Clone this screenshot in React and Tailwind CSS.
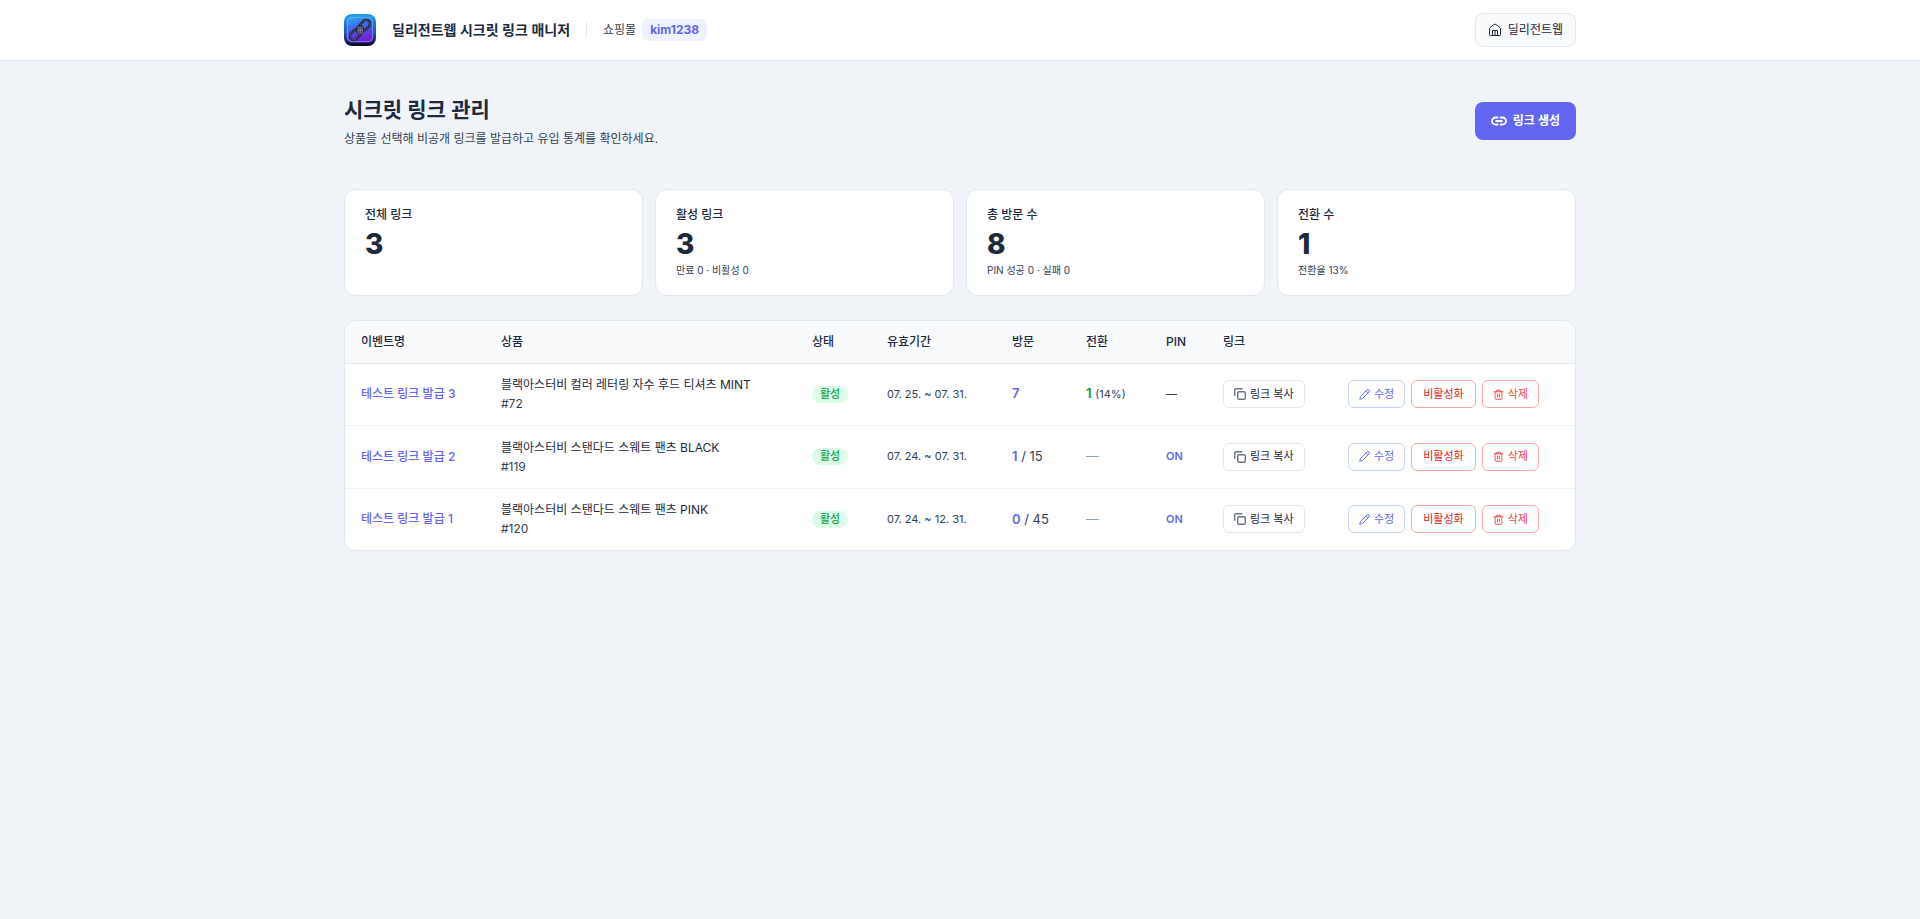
import React from "react";

const links = [
  {
    id: 3,
    name: "테스트 링크 발급 3",
    product: "블랙아스터비 컬러 레터링 자수 후드 티셔츠 MINT",
    productNo: "#72",
    period: "07. 25. ~ 07. 31.",
    visits: 7,
    conversions: 1,
    rate: "14%",
    pin: false,
  },
  {
    id: 2,
    name: "테스트 링크 발급 2",
    product: "블랙아스터비 스탠다드 스웨트 팬츠 BLACK",
    productNo: "#119",
    period: "07. 24. ~ 07. 31.",
    visits: 1,
    limit: 15,
    pin: true,
  },
  {
    id: 1,
    name: "테스트 링크 발급 1",
    product: "블랙아스터비 스탠다드 스웨트 팬츠 PINK",
    productNo: "#120",
    period: "07. 24. ~ 12. 31.",
    visits: 0,
    limit: 45,
    pin: true,
  },
];

const stats = [
  { label: "전체 링크", value: 3 },
  { label: "활성 링크", value: 3, sub: "만료 0 · 비활성 0" },
  { label: "총 방문 수", value: 8, sub: "PIN 성공 0 · 실패 0" },
  { label: "전환 수", value: 1, sub: "전환율 13%" },
];

function Logo() {
  return (
    <svg className="size-8" viewBox="0 0 32 32" aria-hidden="true">
      <defs>
        <linearGradient id="logoBg" x1="0" y1="0" x2="0.3" y2="1">
          <stop offset="0" stopColor="#2bb4f2" />
          <stop offset="0.45" stopColor="#3f6be6" />
          <stop offset="1" stopColor="#7420d6" />
        </linearGradient>
        <linearGradient id="logoEdge" x1="0" y1="0" x2="0" y2="1">
          <stop offset="0" stopColor="#1f9fe4" />
          <stop offset="0.6" stopColor="#2450b4" />
          <stop offset="1" stopColor="#080820" />
        </linearGradient>
      </defs>
      <rect width="32" height="32" rx="8" fill="url(#logoEdge)" />
      <rect x="2.5" y="2.5" width="27" height="26" rx="5" fill="url(#logoBg)" />
      <rect x="3.5" y="3.5" width="25" height="24" rx="4.5" fill="none" stroke="#6fd0ff" strokeOpacity="0.5" />
      <g transform="rotate(-45 16 16)" fill="none">
        <rect x="3.5" y="12.2" width="12" height="7.6" rx="3.8" stroke="#191b38" strokeWidth="2.4" />
        <rect x="16.5" y="12.2" width="12" height="7.6" rx="3.8" stroke="#191b38" strokeWidth="2.4" />
        <rect x="3.5" y="12.2" width="12" height="7.6" rx="3.8" stroke="#6a6d92" strokeWidth="0.7" />
        <rect x="16.5" y="12.2" width="12" height="7.6" rx="3.8" stroke="#6a6d92" strokeWidth="0.7" />
      </g>
      <ellipse cx="16" cy="16" rx="4.2" ry="5" fill="#20203d" />
      <rect x="14" y="13" width="4.2" height="6.4" rx="1.4" fill="#3a3553" stroke="#a99bbd" strokeWidth="0.8" />
      <path d="M16.1 14.8v2.6" stroke="#e0d0e0" strokeWidth="0.9" />
    </svg>
  );
}

function HomeIcon() {
  return (
    <svg className="size-3.5" viewBox="0 0 14 14" fill="none" stroke="currentColor" strokeLinejoin="round" aria-hidden="true">
      <path d="M1.5 5.8a1.5 1.5 0 0 1 .6-1.2L6.1 1.5a1.5 1.5 0 0 1 1.8 0l4 3.1a1.5 1.5 0 0 1 .6 1.2v6a.7.7 0 0 1-.7.7H2.2a.7.7 0 0 1-.7-.7z" />
      <path d="M4.5 12.5v-5h5v5M7 8v4.500" />
    </svg>
  );
}

function LinkIcon() {
  return (
    <svg className="size-4" viewBox="0 0 16 16" fill="none" stroke="currentColor" strokeWidth="1.8" strokeLinecap="round" aria-hidden="true">
      <path d="M6.5 4.5h-2a3.5 3.5 0 0 0 0 7h2M9.5 4.5h2a3.5 3.5 0 0 1 0 7h-2M5.2 8h5.6" />
    </svg>
  );
}

function CopyIcon() {
  return (
    <svg className="size-3" viewBox="0 0 12 12" fill="none" stroke="#6b7280" strokeWidth="1.4" strokeLinecap="round" strokeLinejoin="round" aria-hidden="true">
      <rect x="3.7" y="3.7" width="7.6" height="7.6" rx="1.4" />
      <path d="M.7 7.3V2.1A1.4 1.4 0 0 1 2.1.7h5.8" />
    </svg>
  );
}

function PencilIcon() {
  return (
    <svg className="size-[11px]" viewBox="0 0 12 12" fill="none" stroke="currentColor" strokeLinejoin="round" aria-hidden="true">
      <path d="M.8 11.2 1.6 8.2 8.7 1.1a1.5 1.5 0 0 1 2.2 2.2L3.8 10.4z" />
      <path d="m7.5 2.3 2.2 2.2" />
    </svg>
  );
}

function TrashIcon() {
  return (
    <svg className="size-[11px]" viewBox="0 0 12 12" fill="none" stroke="currentColor" strokeLinecap="round" strokeLinejoin="round" aria-hidden="true">
      <path d="M1.2 3h9.6M4 3V1.3h4V3M2.3 3v7.2a1 1 0 0 0 1 1h5.4a1 1 0 0 0 1-1V3M5 5.5v3M7 5.5v3" />
    </svg>
  );
}

function LinkRow({ link }) {
  return (
    <tr className="h-[62px] border-b border-slate-100 last:border-0 even:h-[63px]">
      <td className="px-4">
        <a href="#" className="font-medium text-[#6366f1]">{link.name}</a>
      </td>
      <td className="px-4 text-slate-800">
        <div className="leading-[19px]">{link.product}</div>
        <div className="leading-[19px] text-[#334155]">{link.productNo}</div>
      </td>
      <td className="px-4">
        <span className="inline-block rounded-full bg-green-100 px-2 text-[11px] leading-[17px] font-medium text-[#16a34a]">
          활성
        </span>
      </td>
      <td className="px-4 text-[11px]">{link.period}</td>
      <td className="px-4 text-[13px]">
        <span className="font-semibold text-[#6366f1]">{link.visits}</span>
        {link.limit && <span> / {link.limit}</span>}
      </td>
      <td className="px-4 text-[13px]">
        {link.conversions ? (
          <>
            <span className="font-bold text-[#16a34a]">{link.conversions}</span>{" "}
            <span className="text-[11px]">({link.rate})</span>
          </>
        ) : (
          <span className="text-slate-400">—</span>
        )}
      </td>
      <td className="px-4 text-[11px]">
        {link.pin ? <span className="font-semibold text-[#6366f1]">ON</span> : "—"}
      </td>
      <td className="px-4 text-[11px]">
        <button className="flex h-7 items-center gap-1 rounded-md border border-slate-200 bg-white px-2.5 text-slate-800">
          <CopyIcon /> 링크 복사
        </button>
      </td>
      <td className="px-4 text-[11px]">
        <div className="flex gap-1.5">
          <button className="flex h-7 items-center gap-1 rounded-md border border-[#c7d2fe] bg-white px-2.5 text-[#6366f1]">
            <PencilIcon /> 수정
          </button>
          <button className="flex h-7 items-center rounded-md border border-[#fca5a5] bg-white px-[11px] text-[#dc2626]">
            비활성화
          </button>
          <button className="flex h-7 items-center gap-1 rounded-md border border-[#fca5a5] bg-white px-2.5 text-[#ef4444]">
            <TrashIcon /> 삭제
          </button>
        </div>
      </td>
    </tr>
  );
}

function App() {
  return (
    <div className="min-h-screen bg-[#f0f4f9] font-['Inter','Noto_Sans_CJK_KR',sans-serif] text-xs text-[#334155]">

      {/* HEADER */}
      <header className="border-b border-slate-200 bg-white">
        <div className="mx-auto flex h-15 max-w-7xl items-center justify-between px-6">
          <div className="flex items-center">
            <Logo />
            <span className="ml-4 text-sm font-semibold text-slate-800">딜리전트웹 시크릿 링크 매니저</span>
            <span className="mx-4 h-4 w-px bg-slate-200" />
            <span>쇼핑몰</span>
            <span className="ml-1.5 rounded-md bg-[#eef2ff] px-2 leading-[22px] font-bold text-[#6366f1]">
              kim1238
            </span>
          </div>
          <a href="#" className="flex h-[34px] items-center gap-1.5 rounded-lg border border-slate-200 bg-slate-50 px-3 text-slate-800">
            <HomeIcon /> 딜리전트웹
          </a>
        </div>
      </header>

      <main className="mx-auto max-w-7xl px-6 py-8">

        {/* TITLE */}
        <div className="flex items-center justify-between">
          <div>
            <h1 className="text-[21px] leading-[34px] font-semibold text-slate-800">시크릿 링크 관리</h1>
            <p className="mt-0.5 leading-5">상품을 선택해 비공개 링크를 발급하고 유입 통계를 확인하세요.</p>
          </div>
          <button className="flex h-[38px] items-center gap-1.5 rounded-lg bg-[#6366f1] px-4 font-semibold text-white">
            <LinkIcon /> 링크 생성
          </button>
        </div>

        {/* STATS */}
        <div className="mt-10 grid grid-cols-4 gap-3">
          {stats.map((stat) => (
            <div key={stat.label} className="min-h-[107px] rounded-xl border border-slate-200 bg-white px-5 py-4">
              <p className="leading-[18px] font-medium text-slate-800">{stat.label}</p>
              <p className="mt-1 text-[28px] leading-8 font-extrabold text-slate-800">{stat.value}</p>
              {stat.sub && <p className="mt-0.5 text-[10px] leading-4">{stat.sub}</p>}
            </div>
          ))}
        </div>

        {/* TABLE */}
        <div className="mt-6 overflow-hidden rounded-xl border border-slate-200 bg-white">
          <table className="w-full table-fixed text-left whitespace-nowrap">
            <thead>
              <tr className="h-[42px] border-b border-slate-200 bg-slate-50 text-slate-800">
                <th className="w-[140px] px-4 font-medium">이벤트명</th>
                <th className="px-4 font-medium">상품</th>
                <th className="w-[75px] px-4 font-medium">상태</th>
                <th className="w-[125px] px-4 font-medium">유효기간</th>
                <th className="w-[74px] px-4 font-medium">방문</th>
                <th className="w-[80px] px-4 font-medium">전환</th>
                <th className="w-[57px] px-4 font-medium">PIN</th>
                <th className="w-[125px] px-4 font-medium">링크</th>
                <th className="w-[243px] px-4" aria-label="관리"></th>
              </tr>
            </thead>
            <tbody>
              {links.map((link) => (
                <LinkRow key={link.id} link={link} />
              ))}
            </tbody>
          </table>
        </div>

      </main>
    </div>
  );
}

export default App;
